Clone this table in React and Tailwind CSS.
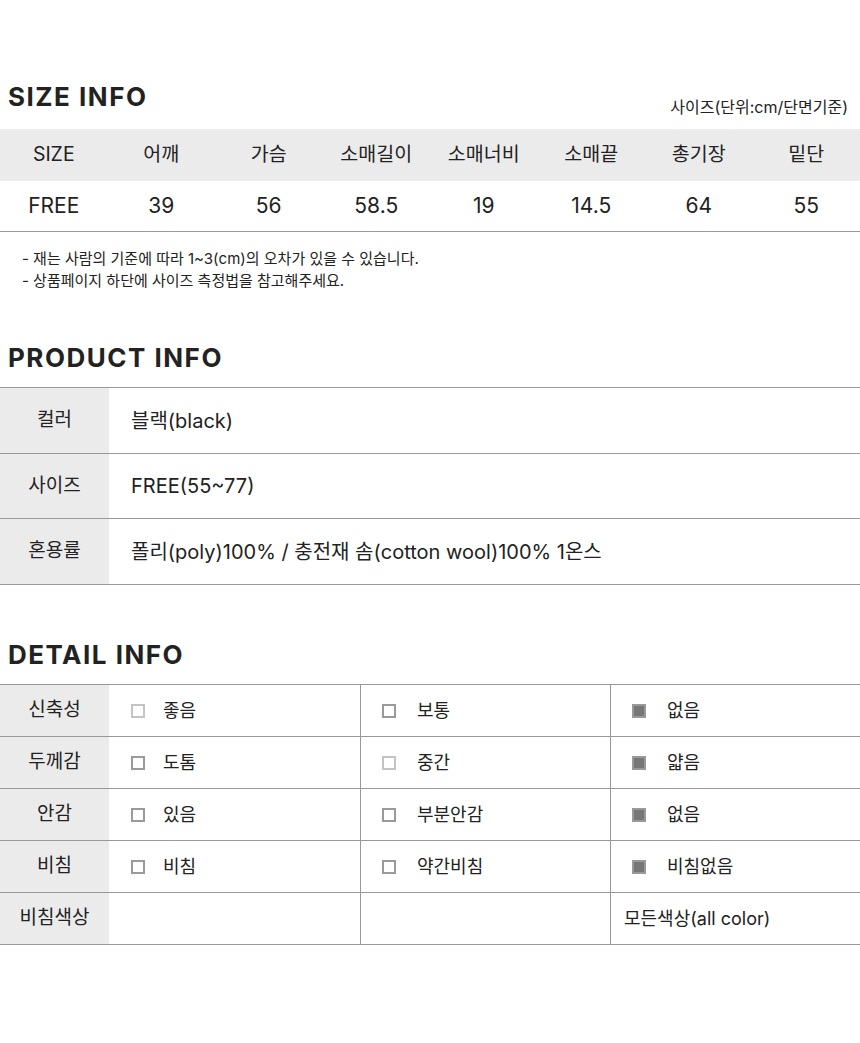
import React from "react";

const SIZE_COLS = ["SIZE", "어깨", "가슴", "소매길이", "소매너비", "소매끝", "총기장", "밑단"];
const SIZE_VALS = ["FREE", "39", "56", "58.5", "19", "14.5", "64", "55"];

const PRODUCT = [
  ["컬러", "블랙(black)"],
  ["사이즈", "FREE(55~77)"],
  ["혼용률", "폴리(poly)100% / 충전재 솜(cotton wool)100% 1온스"],
];

// box: 0 = empty, 1 = empty light, 2 = filled
const DETAIL = [
  { label: "신축성", cells: [["좋음", 1], ["보통", 0], ["없음", 2]] },
  { label: "두께감", cells: [["도톰", 0], ["중간", 1], ["얇음", 2]] },
  { label: "안감", cells: [["있음", 0], ["부분안감", 0], ["없음", 2]] },
  { label: "비침", cells: [["비침", 0], ["약간비침", 0], ["비침없음", 2]] },
];

function Box({ kind }) {
  if (kind === 2) return <span className="w-[14px] h-[14px] border-2 border-[#999] bg-[#777] shrink-0" />;
  if (kind === 1) return <span className="w-[14px] h-[14px] border-2 border-[#c4c4c4] shrink-0" />;
  return <span className="w-[14px] h-[14px] border-2 border-[#9a9a9a] shrink-0" />;
}

function Heading({ children }) {
  return <h2 className="text-[26px] leading-[32px] font-bold tracking-[1.5px] text-[#222] pl-[8px]">{children}</h2>;
}

export default function App() {
  return (
    <div className="w-[860px] bg-white text-[#222] pb-[99px]" style={{ fontFamily: 'Inter, "Noto Sans CJK KR", sans-serif' }}>
      {/* SIZE INFO */}
      <div className="pt-[81px] pb-[16px] flex justify-between items-end">
        <Heading>SIZE INFO</Heading>
        <span className="text-[16px] leading-[20px] pr-[12px] mb-[-4px]">사이즈(단위:cm/단면기준)</span>
      </div>
      <div className="grid grid-cols-8 h-[52px] bg-[#ebebeb] text-[19.5px]">
        {SIZE_COLS.map((c) => (
          <div key={c} className="flex items-center justify-center">{c}</div>
        ))}
      </div>
      <div className="grid grid-cols-8 h-[51px] border-b border-[#999] text-[21px]">
        {SIZE_VALS.map((v, i) => (
          <div key={i} className="flex items-center justify-center">{v}</div>
        ))}
      </div>
      <div className="mt-[16px] pl-[22px] text-[15px] leading-[22px]">
        <p>- 재는 사람의 기준에 따라 1~3(cm)의 오차가 있을 수 있습니다.</p>
        <p>- 상품페이지 하단에 사이즈 측정법을 참고해주세요.</p>
      </div>

      {/* PRODUCT INFO */}
      <div className="mt-[50px] mb-[13px]">
        <Heading>PRODUCT INFO</Heading>
      </div>
      <div className="border-t border-[#999]">
        {PRODUCT.map(([k, v], i) => (
          <div key={k} className={`flex border-b border-[#999] ${i === 1 ? "h-[65px]" : "h-[66px]"}`}>
            <div className="w-[109px] bg-[#ebebeb] flex items-center justify-center text-[19px]">{k}</div>
            <div className="flex items-center pl-[22px] text-[20px]">{v}</div>
          </div>
        ))}
      </div>

      {/* DETAIL INFO */}
      <div className="mt-[54px] mb-[13px]">
        <Heading>DETAIL INFO</Heading>
      </div>
      <div className="border-t border-[#999]">
        {DETAIL.map((row) => (
          <div key={row.label} className="grid grid-cols-[109px_252px_250px_1fr] h-[52px] border-b border-[#999] text-[18px]">
            <div className="bg-[#ebebeb] flex items-center justify-center text-[19px]">{row.label}</div>
            {row.cells.map(([t, kind], j) => (
              <div key={j} className={`flex items-center ${j < 2 ? "border-r border-[#999]" : ""} ${j === 0 ? "pl-[22px]" : "pl-[21px]"}`}>
                <Box kind={kind} />
                <span className={j === 0 ? "ml-[18px]" : "ml-[21px]"}>{t}</span>
              </div>
            ))}
          </div>
        ))}
        <div className="grid grid-cols-[109px_252px_250px_1fr] h-[52px] border-b border-[#999] text-[18px]">
          <div className="bg-[#ebebeb] flex items-center justify-center text-[19px]">비침색상</div>
          <div className="border-r border-[#999]" />
          <div className="border-r border-[#999]" />
          <div className="flex items-center pl-[13px]">모든색상(all color)</div>
        </div>
      </div>
    </div>
  );
}
